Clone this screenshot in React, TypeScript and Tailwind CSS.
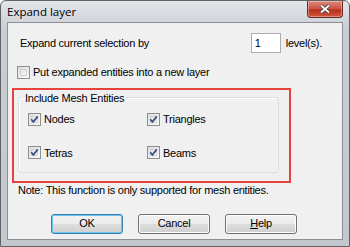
import React from "react";

const font = { fontFamily: '"Liberation Sans", Arial, sans-serif' };

function Check({ checked }: { checked?: boolean }) {
  return (
    <span className="relative block h-[13px] w-[13px] shrink-0 border border-[#8e8f8f] bg-gradient-to-br from-[#dcdcdc] to-[#fbfbfb]">
      <span className="absolute inset-[2px] border border-[#d0d0d0] bg-gradient-to-br from-[#e3e3e3] to-[#f7f7f7]" />
      {checked && (
        <svg viewBox="0 0 11 11" className="absolute inset-0 h-[11px] w-[11px]">
          <path d="M2.2 5.2 L4.4 7.8 L8.8 2.4" fill="none" stroke="#3c4f8a" strokeWidth="1.7" />
        </svg>
      )}
    </span>
  );
}

function Box({ label, checked }: { label: string; checked?: boolean }) {
  return (
    <label className="flex items-center gap-[3px] text-[11px] text-black">
      <Check checked={checked} />
      <span>{label}</span>
    </label>
  );
}

function Btn({ children, primary }: { children: React.ReactNode; primary?: boolean }) {
  return (
    <button
      className={
        "h-[20px] w-[72px] rounded-[3px] border bg-[linear-gradient(#f2f2f2_0%,#ebebeb_48%,#dddddd_52%,#cfcfcf_100%)] text-[11px] text-black " +
        (primary ? "border-[#3c7fb1] shadow-[inset_0_0_0_1px_#6ec3e8]" : "border-[#707070] shadow-[inset_0_0_0_1px_#fcfcfc]")
      }
    >
      {children}
    </button>
  );
}

export default function App() {
  return (
    <div style={font} className="h-[247px] w-[350px] overflow-hidden bg-white">
      <div className="flex h-full w-full flex-col rounded-t-[6px] border border-[#626262] bg-[linear-gradient(#e2e5e9,#c9ced4_30px,#c3c8ce)]">
        {/* title bar */}
        <div className="flex h-[21px] shrink-0 items-start">
          <span className="ml-[6px] mt-[4px] text-[12px] leading-[14px] text-black" style={{ fontFamily: '"Open Sans", "Liberation Sans", sans-serif', fontSize: 11.5 }}>
            Expand layer
          </span>
          <div className="ml-auto mr-[6px] flex h-[17px] w-[36px] items-center justify-center rounded-b-[4px] border border-t-0 border-[#6b2a22] bg-[linear-gradient(#dc8b7f,#c9503f_50%,#b5301c_55%,#d2543a)] shadow-[inset_0_0_0_1px_rgba(255,255,255,0.35)]">
            <svg viewBox="0 0 12 10" className="h-[10px] w-[12px]">
              <path d="M2 1.5 L10 8.5 M10 1.5 L2 8.5" stroke="#3a3a3a" strokeWidth="3.4" />
              <path d="M2 1.5 L10 8.5 M10 1.5 L2 8.5" stroke="#ffffff" strokeWidth="1.8" />
            </svg>
          </div>
        </div>

        {/* client */}
        <div className="mx-[6px] mb-[6px] flex flex-1 flex-col border border-[#8c9096] bg-[#f0f0f0] text-[11px] tracking-[-0.25px] text-black">
          <div className="ml-[12px] mt-[10px] flex h-[20px] items-center">
            <span>Expand current selection by</span>
            <div className="ml-auto flex h-[20px] w-[30px] items-center border border-[#abadb3] bg-white pl-[3px]">1</div>
            <span className="ml-[5px] mr-[20px]">level(s).</span>
          </div>

          <div className="ml-[9px] mt-[11px]">
            <Box label="Put expanded entities into a new layer" />
          </div>

          <div className="ml-[4px] mr-[51px] mt-[7px] h-[95px] border-2 border-[#e8413d] pb-[8px] pl-[4px] pr-[10px]">
            <fieldset className="h-full rounded-[3px] border border-[#d5dfe5] px-[9px] pt-[5px] shadow-[inset_1px_1px_0_#ffffff]">
              <legend className="-ml-[5px] px-[2px]">Include Mesh Entities</legend>
              <div className="grid grid-cols-[119px_1fr] gap-y-[17px]">
                <Box label="Nodes" checked />
                <Box label="Triangles" checked />
                <Box label="Tetras" checked />
                <Box label="Beams" checked />
              </div>
            </fieldset>
          </div>

          <div className="ml-[10px] mt-[1px] leading-[13px]">Note: This function is only supported for mesh entities.</div>

          <div className="ml-[43px] mt-[17px] flex gap-[15px]">
            <Btn primary>OK</Btn>
            <Btn>Cancel</Btn>
            <Btn>
              <span className="underline">H</span>elp
            </Btn>
          </div>
        </div>
      </div>
    </div>
  );
}
